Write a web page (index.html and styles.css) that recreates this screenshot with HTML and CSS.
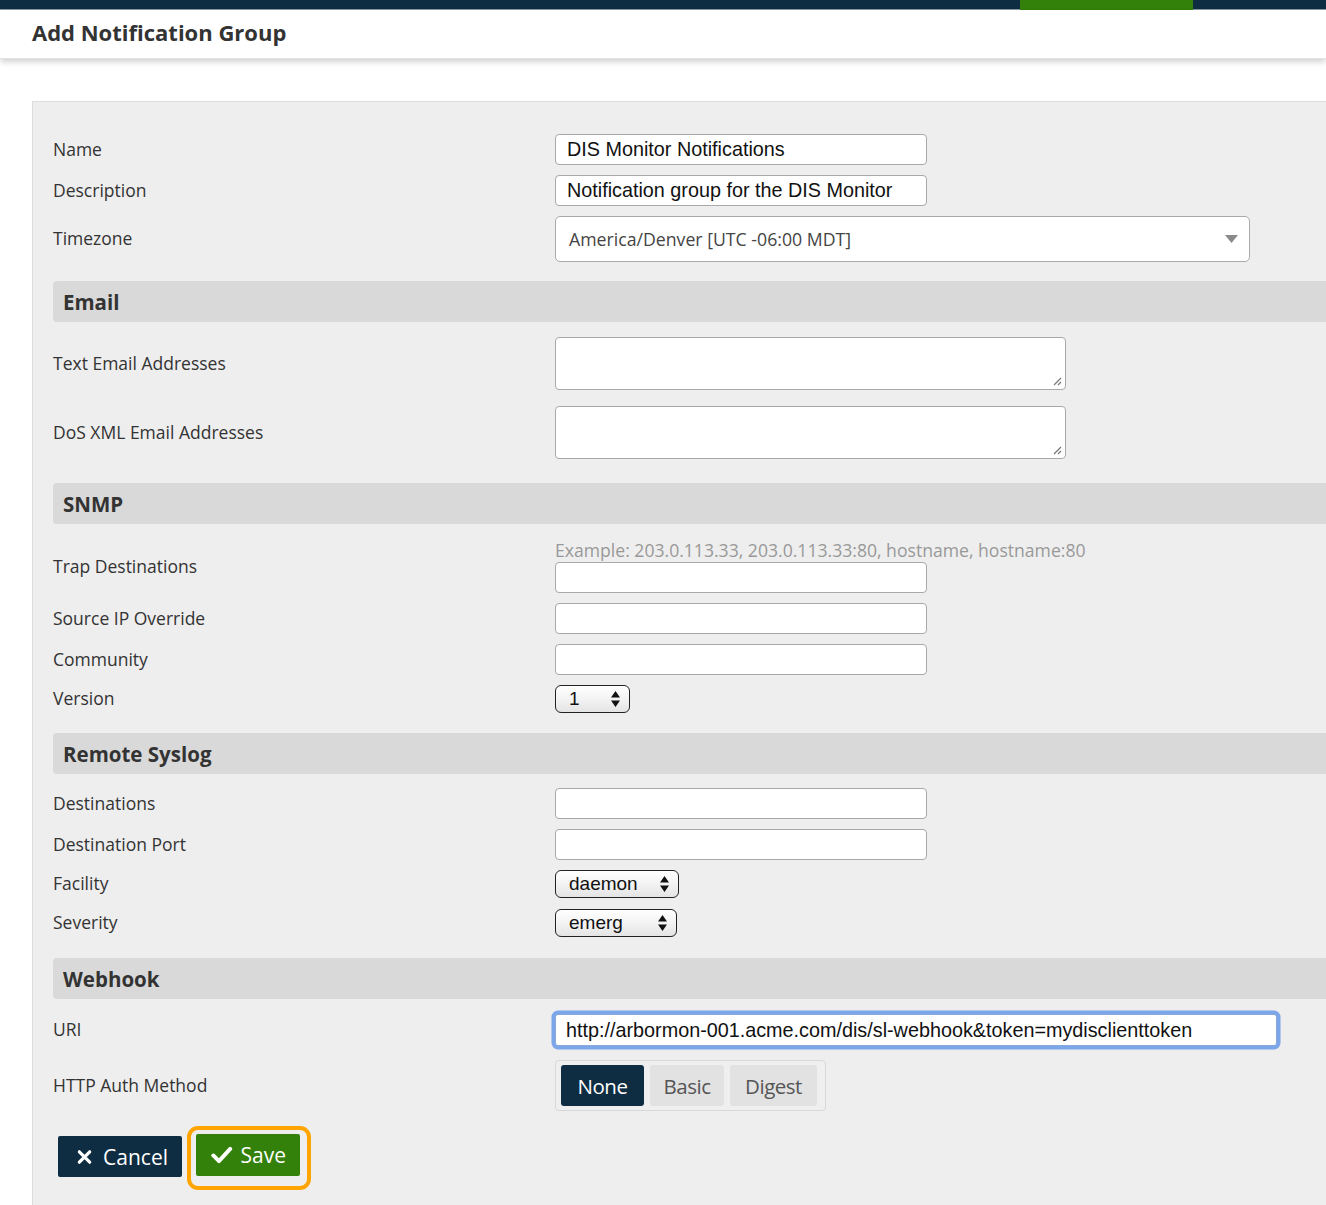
FILE: index.html
```html
<!DOCTYPE html>
<html>
<head>
<meta charset="utf-8">
<link rel="stylesheet" href="styles.css">
</head>
<body>
<div class="topbar"><div class="topbar-active"></div></div>
<header class="page-header"><h1>Add Notification Group</h1></header>
<main class="panel">
  <div class="row r-name">
    <label class="lbl">Name</label>
    <div class="field"><div class="input">DIS Monitor Notifications</div></div>
  </div>
  <div class="row r-desc">
    <label class="lbl">Description</label>
    <div class="field"><div class="input">Notification group for the DIS Monitor</div></div>
  </div>
  <div class="row r-tz">
    <label class="lbl">Timezone</label>
    <div class="field"><div class="tz-select"><span>America/Denver [UTC -06:00 MDT]</span><svg width="13" height="8" viewBox="0 0 13 8"><path d="M0 0h13L6.5 8z" fill="#8a8a8a"/></svg></div></div>
  </div>

  <h2 class="section s-email">Email</h2>
  <div class="row r-ta1">
    <label class="lbl">Text Email Addresses</label>
    <div class="field"><div class="textarea"><svg class="grip" width="9" height="9" viewBox="0 0 9 9"><path d="M8 1L1 8M8 5L5 8" stroke="#777" stroke-width="1.2"/></svg></div></div>
  </div>
  <div class="row r-ta2">
    <label class="lbl">DoS XML Email Addresses</label>
    <div class="field"><div class="textarea"><svg class="grip" width="9" height="9" viewBox="0 0 9 9"><path d="M8 1L1 8M8 5L5 8" stroke="#777" stroke-width="1.2"/></svg></div></div>
  </div>

  <h2 class="section s-snmp">SNMP</h2>
  <div class="row r-trap">
    <label class="lbl">Trap Destinations</label>
    <div class="field">
      <div class="hint">Example: 203.0.113.33, 203.0.113.33:80, hostname, hostname:80</div>
      <div class="input"></div>
    </div>
  </div>
  <div class="row r-src">
    <label class="lbl">Source IP Override</label>
    <div class="field"><div class="input"></div></div>
  </div>
  <div class="row r-comm">
    <label class="lbl">Community</label>
    <div class="field"><div class="input"></div></div>
  </div>
  <div class="row r-ver">
    <label class="lbl">Version</label>
    <div class="field"><div class="mac-select sel-ver"><span>1</span><svg width="9" height="16" viewBox="0 0 9 16"><path d="M4.5 0L9 6.5H0zM4.5 16L0 9.5h9z" fill="#111"/></svg></div></div>
  </div>

  <h2 class="section s-syslog">Remote Syslog</h2>
  <div class="row r-dest">
    <label class="lbl">Destinations</label>
    <div class="field"><div class="input"></div></div>
  </div>
  <div class="row r-port">
    <label class="lbl">Destination Port</label>
    <div class="field"><div class="input"></div></div>
  </div>
  <div class="row r-fac">
    <label class="lbl">Facility</label>
    <div class="field"><div class="mac-select sel-fac"><span>daemon</span><svg width="9" height="16" viewBox="0 0 9 16"><path d="M4.5 0L9 6.5H0zM4.5 16L0 9.5h9z" fill="#111"/></svg></div></div>
  </div>
  <div class="row r-sev">
    <label class="lbl">Severity</label>
    <div class="field"><div class="mac-select sel-sev"><span>emerg</span><svg width="9" height="16" viewBox="0 0 9 16"><path d="M4.5 0L9 6.5H0zM4.5 16L0 9.5h9z" fill="#111"/></svg></div></div>
  </div>

  <h2 class="section s-webhook">Webhook</h2>
  <div class="row r-uri">
    <label class="lbl">URI</label>
    <div class="field"><div class="input input-uri">http://arbormon-001.acme.com/dis/sl-webhook&amp;token=mydisclienttoken</div></div>
  </div>
  <div class="row r-auth">
    <label class="lbl">HTTP Auth Method</label>
    <div class="field">
      <div class="btn-group">
        <span class="seg seg-active">None</span>
        <span class="seg">Basic</span>
        <span class="seg">Digest</span>
      </div>
    </div>
  </div>

  <div class="actions">
    <button class="btn btn-cancel"><svg width="16" height="16" viewBox="0 0 16 16"><path d="M2.5 2.5l11 11M13.5 2.5l-11 11" stroke="#fff" stroke-width="3.4" stroke-linecap="round"/></svg>Cancel</button>
    <div class="focus-ring"><button class="btn btn-save"><svg width="23" height="18" viewBox="0 0 23 18"><path d="M2.5 9.5l6 6L20.5 2.5" fill="none" stroke="#fff" stroke-width="4.2" stroke-linecap="round" stroke-linejoin="round"/></svg>Save</button></div>
  </div>
</main>
</body>
</html>
```
FILE: styles.css
```css
* { box-sizing: border-box; }
html, body { margin: 0; padding: 0; }
body {
  background: #fff;
  font-family: "Open Sans", "Liberation Sans", sans-serif;
  color: #333;
  width: 1326px;
  height: 1205px;
  overflow: hidden;
}
.topbar {
  height: 10px;
  background: #0f2d42;
  border-bottom: 1px solid #8a9aa5;
  position: relative;
}
.topbar-active {
  position: absolute;
  left: 1020px;
  top: 0;
  width: 173px;
  height: 10px;
  background: #33800a;
}
.page-header {
  height: 49px;
  background: #fff;
  padding-left: 32px;
  display: flex;
  align-items: center;
  box-shadow: 0 3px 6px rgba(0,0,0,0.18);
  border-bottom: 1px solid #e2e2e2;
  position: relative;
}
.page-header h1 {
  margin: 0;
  font-size: 22px;
  font-weight: 700;
  color: #333;
  position: relative;
  top: -2px;
}
.panel {
  margin: 42px 0 0 32px;
  background: #eeeeee;
  border-top: 1px solid #dcdcdc;
  border-left: 1px solid #dcdcdc;
  padding: 32px 0 40px 20px;
  min-height: 1110px;
}
.row {
  display: flex;
  align-items: center;
}
.lbl {
  width: 502px;
  flex: none;
  font-size: 17.5px;
  color: #333;
  position: relative;
  top: -1px;
}
.field { flex: none; }
.input {
  width: 372px;
  height: 31px;
  background: #fff;
  border: 1px solid #a9a9a9;
  border-radius: 4px;
  font-family: "Liberation Sans", Arial, sans-serif;
  font-size: 19.8px;
  color: #111;
  padding: 0 11px;
  line-height: 29px;
  white-space: nowrap;
  overflow: hidden;
}
.r-desc { margin-top: 10px; }
.r-tz { margin-top: 10px; }
.tz-select {
  width: 695px;
  height: 46px;
  background: #fff;
  border: 1px solid #aaa;
  border-radius: 5px;
  display: flex;
  align-items: center;
  justify-content: space-between;
  padding: 0 11px 0 13px;
  font-size: 17.7px;
  color: #444;
}
.section {
  margin: 0;
  height: 41px;
  background: #d9d9d9;
  border-radius: 4px 0 0 4px;
  font-size: 20.5px;
  font-weight: 700;
  color: #333;
  padding-left: 10px;
  display: flex;
  align-items: center;
}
.s-email { margin-top: 19px; }
.s-snmp { margin-top: 24px; }
.s-syslog { margin-top: 20px; }
.s-webhook { margin-top: 21px; }
.textarea {
  width: 511px;
  height: 53px;
  background: #fff;
  border: 1px solid #a9a9a9;
  border-radius: 4px;
  position: relative;
}
.grip { position: absolute; right: 3px; bottom: 3px; }
.r-ta1 { margin-top: 15px; }
.r-ta2 { margin-top: 16px; }
.r-trap { margin-top: 16px; }
.hint {
  font-size: 17.6px;
  color: #999;
  line-height: 20px;
  margin-bottom: 2px;
  white-space: nowrap;
}
.r-src { margin-top: 10px; }
.r-comm { margin-top: 10px; }
.r-ver { margin-top: 10px; }
.r-dest { margin-top: 14px; }
.r-port { margin-top: 10px; }
.r-fac { margin-top: 10px; }
.r-sev { margin-top: 11px; }
.mac-select {
  height: 28px;
  border: 1.5px solid #222;
  border-radius: 6px;
  background: linear-gradient(#ffffff 0%, #f3f3f3 50%, #e4e4e4 100%);
  box-shadow: inset 0 1px 1px rgba(255,255,255,0.9);
  display: flex;
  align-items: center;
  justify-content: space-between;
  padding: 0 9px 0 13px;
  font-family: "Liberation Sans", Arial, sans-serif;
  font-size: 19px;
  color: #111;
}
.sel-ver { width: 75px; }
.sel-fac { width: 124px; }
.sel-sev { width: 122px; }
.r-uri { margin-top: 15px; }
.input-uri {
  width: 722px;
  height: 32px;
  line-height: 30px;
  border: 1px solid #8aa8d8;
  box-shadow: 0 0 0 3.5px #7ba6ea;
  border-radius: 3px;
  padding-left: 10px;
}
.r-auth { margin-top: 14px; }
.btn-group {
  display: flex;
  gap: 6px;
  width: 271px;
  height: 51px;
  border: 1px solid #d8d8d8;
  border-radius: 4px;
  padding: 4px 5px;
  background: #efefef;
}
.seg {
  display: flex;
  align-items: center;
  justify-content: center;
  background: #e2e2e2;
  border-radius: 3px;
  font-size: 20.5px;
  color: #555;
  letter-spacing: -0.5px;
}
.seg:nth-child(1) { width: 83px; }
.seg:nth-child(2) { width: 74px; }
.seg:nth-child(3) { width: 87px; }
.seg-active { background: #0f2d42; color: #fff; }
.actions {
  display: flex;
  align-items: flex-start;
  gap: 5px;
  margin-top: 15px;
  padding-left: 5px;
}
.btn {
  border: 0;
  height: 41px;
  border-radius: 2px;
  font-family: "Open Sans", sans-serif;
  font-size: 21px;
  color: #fff;
  display: flex;
  align-items: center;
  gap: 11px;
  padding: 0 14px 0 19px;
  cursor: pointer;
}
.btn-cancel { background: #0f2d42; width: 124px; margin-top: 10px; }
.btn-save { background: #33800a; width: 104px; height: 42px; gap: 8px; padding-left: 15px; }
.focus-ring {
  border: 4.5px solid #ffa400;
  border-radius: 11px;
  padding: 4px 7px 10px 5px;
}
```
